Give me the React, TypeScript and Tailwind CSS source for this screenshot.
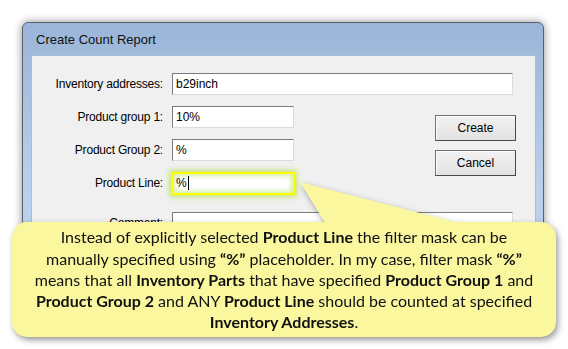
const dlgFont = { fontFamily: '"Liberation Sans", Arial, sans-serif' };

function Field({ label, value, wide }: { label: string; value: string; wide?: boolean }) {
  return (
    <div className="flex h-[22px] items-center">
      <div className="w-[132px] pr-[1px] text-right text-[12px] tracking-[-0.2px] text-black">{label}</div>
      <div
        className={`ml-[8px] flex h-[22px] items-center border border-t-[#7c7c7c] border-l-[#7c7c7c] border-r-[#dcdcdc] border-b-[#dcdcdc] bg-white pl-[3px] text-[12px] text-black ${
          wide ? 'w-[341px]' : 'w-[122px]'
        }`}
      >
        {value}
      </div>
    </div>
  );
}

function Btn({ children }: { children: string }) {
  return (
    <div className="flex h-[26px] w-[81px] items-center justify-center border border-[#707070] border-r-[#4a4a4a] border-b-[#4a4a4a] bg-gradient-to-b from-[#f2f2f2] to-[#e2e2e2] text-[12px] text-black shadow-[inset_1px_1px_0_#ffffff]">
      {children}
    </div>
  );
}

export default function App() {
  return (
    <div className="relative h-[349px] w-[568px] overflow-hidden bg-white pl-[22px] pt-[22px]" style={dlgFont}>
      {/* dialog window */}
      <div className="flex h-[308px] w-[522px] flex-col rounded-t-[6px] border border-[#5a6270] bg-gradient-to-b from-[#9ab5d8] via-[#b9cfea] to-[#c3d7ee] shadow-[0_0_9px_rgba(0,0,0,0.45)]">
        <div className="flex h-[32px] shrink-0 items-center pl-[13px] pt-[2px] text-[13px] text-[#111]">
          Create Count Report
        </div>
        <div className="ml-[8px] mr-[7px] flex-1 border border-[#a9bdd5] bg-[#f0f0f0] pt-[17px]">
          <Field label="Inventory addresses:" value="b29inch" wide />
          <div className="mt-[11px] flex">
            <div className="flex flex-col gap-[11px]">
              <Field label="Product group 1:" value="10%" />
              <Field label="Product Group 2:" value="%" />
              <div className="flex h-[22px] items-center">
                <div className="w-[132px] pr-[1px] text-right text-[12px] tracking-[-0.2px] text-black">Product Line:</div>
                <div className="ml-[7px] flex h-[23px] w-[124px] items-center border-2 border-[#ffff00] bg-white pl-[3px] text-[12px] text-black shadow-[0_0_5px_2px_rgba(180,225,80,0.75),inset_0_0_5px_2px_rgba(200,235,140,0.8)]">
                  %<span className="ml-[1px] h-[14px] w-[1px] bg-black" />
                </div>
              </div>
            </div>
            <div className="ml-[140px] mt-[9px] flex flex-col gap-[9px]">
              <Btn>Create</Btn>
              <Btn>Cancel</Btn>
            </div>
          </div>
          <div className="mt-[18px] flex h-[22px] items-center">
            <div className="w-[132px] pr-[1px] text-right text-[12px] tracking-[-0.2px] text-black">Comment:</div>
            <div className="ml-[8px] h-[60px] w-[341px] self-start border border-t-[#7c7c7c] border-l-[#7c7c7c] border-r-[#dcdcdc] border-b-[#dcdcdc] bg-white" />
          </div>
        </div>
      </div>

      {/* callout overlay */}
      <div className="pointer-events-none absolute inset-0 drop-shadow-[2px_3px_3px_rgba(0,0,0,0.4)]">
        <svg className="absolute left-0 top-0" width="568" height="349">
          <polygon points="300,182 470,226 327,226" fill="#fbf79e" />
        </svg>
        <div
          className="absolute left-[12px] top-[222px] flex h-[115px] w-[544px] flex-col items-center justify-center rounded-[15px] bg-[#fbf79e] text-center text-[16px] leading-[21.3px] text-[#111]"
          style={{ fontFamily: 'Lato, "Open Sans", sans-serif' }}
        >
          <p>
            Instead of explicitly selected <b>Product Line</b> the filter mask can be
            <br />
            manually specified using <b>“%”</b> placeholder. In my case, filter mask <b>“%”</b>
            <br />
            means that all <b>Inventory Parts</b> that have specified <b>Product Group 1</b> and
            <br />
            <b>Product Group 2</b> and ANY <b>Product Line</b> should be counted at specified
            <br />
            <b>Inventory Addresses</b>.
          </p>
        </div>
      </div>
    </div>
  );
}
